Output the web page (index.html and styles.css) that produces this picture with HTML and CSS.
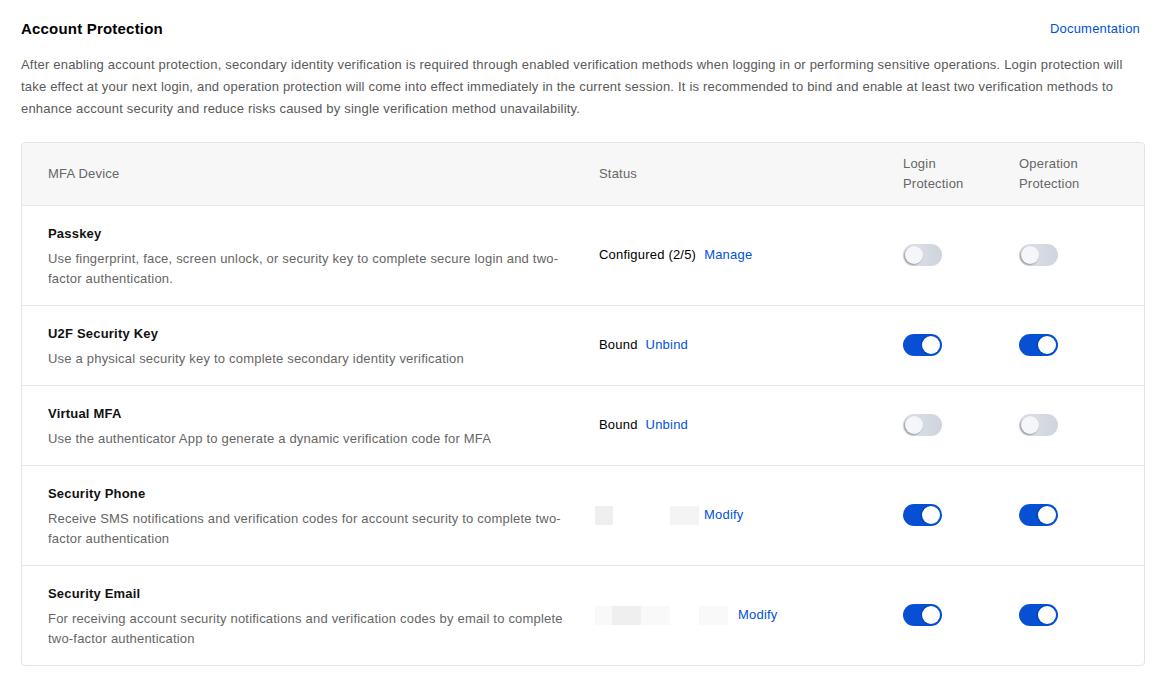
FILE: index.html
```html
<!DOCTYPE html>
<html lang="en">
<head>
    <meta charset="UTF-8">
    <meta name="viewport" content="width=device-width, initial-scale=1.0">
    <title>Account Protection</title>
    <link rel="stylesheet" href="styles.css">
</head>
<body>
    <div class="page">
        <div class="page-head">
            <h2>Account Protection</h2>
            <a class="link" href="#">Documentation</a>
        </div>
        <p class="intro">After enabling account protection, secondary identity verification is required through enabled verification methods when logging in or performing sensitive operations. Login protection will take effect at your next login, and operation protection will come into effect immediately in the current session. It is recommended to bind and enable at least two verification methods to enhance account security and reduce risks caused by single verification method unavailability.</p>

        <div class="mfa-table">
            <div class="row head">
                <div class="cell first">MFA Device</div>
                <div class="cell">Status</div>
                <div class="cell">Login<br>Protection</div>
                <div class="cell">Operation<br>Protection</div>
            </div>

            <div class="row">
                <div class="cell first">
                    <div class="device-name">Passkey</div>
                    <div class="device-desc">Use fingerprint, face, screen unlock, or security key to complete secure login and two-factor authentication.</div>
                </div>
                <div class="cell status">Configured (2/5) <a class="link" href="#">Manage</a></div>
                <div class="cell"><span class="switch"></span></div>
                <div class="cell"><span class="switch"></span></div>
            </div>

            <div class="row">
                <div class="cell first">
                    <div class="device-name">U2F Security Key</div>
                    <div class="device-desc">Use a physical security key to complete secondary identity verification</div>
                </div>
                <div class="cell status">Bound <a class="link" href="#">Unbind</a></div>
                <div class="cell"><span class="switch on"></span></div>
                <div class="cell"><span class="switch on"></span></div>
            </div>

            <div class="row">
                <div class="cell first">
                    <div class="device-name">Virtual MFA</div>
                    <div class="device-desc">Use the authenticator App to generate a dynamic verification code for MFA</div>
                </div>
                <div class="cell status">Bound <a class="link" href="#">Unbind</a></div>
                <div class="cell"><span class="switch"></span></div>
                <div class="cell"><span class="switch"></span></div>
            </div>

            <div class="row">
                <div class="cell first">
                    <div class="device-name">Security Phone</div>
                    <div class="device-desc">Receive SMS notifications and verification codes for account security to complete two-factor authentication</div>
                </div>
                <div class="cell status">
                    <span class="masked">
                        <i class="blk w18 c2"></i><i class="sp w57"></i><i class="blk w29 c1"></i>
                    </span>
                    <a class="link" href="#">Modify</a>
                </div>
                <div class="cell"><span class="switch on"></span></div>
                <div class="cell"><span class="switch on"></span></div>
            </div>

            <div class="row">
                <div class="cell first">
                    <div class="device-name">Security Email</div>
                    <div class="device-desc">For receiving account security notifications and verification codes by email to complete two-factor authentication</div>
                </div>
                <div class="cell status">
                    <span class="masked">
                        <i class="blk w17 c0"></i><i class="blk w29 c2"></i><i class="blk w29 c0"></i><i class="sp w29"></i><i class="blk w29 c0"></i><i class="sp w5"></i>
                    </span>
                    <a class="link" href="#">Modify</a>
                </div>
                <div class="cell"><span class="switch on"></span></div>
                <div class="cell"><span class="switch on"></span></div>
            </div>
        </div>
    </div>
</body>
</html>
```

FILE: styles.css
```css
body {
    margin: 0;
    background: #fff;
    font-family: "Liberation Sans", Arial, Helvetica, sans-serif;
    font-size: 13px;
    letter-spacing: 0.2px;
    color: #000;
}
.page {
    padding: 16px 17px 16px 21px;
}
.page-head {
    display: flex;
    justify-content: space-between;
    align-items: center;
    height: 24px;
}
.page-head h2 {
    margin: 0;
    font-size: 15px;
    font-weight: bold;
    color: #000;
}
.link {
    color: #0052d9;
    text-decoration: none;
}
.page-head .link {
    margin-right: 5px;
}
.intro {
    margin: 14px 0 22px;
    line-height: 22px;
    color: #595959;
}

/* device table */
.mfa-table {
    border: 1px solid #e3e3e3;
    border-radius: 4px;
    overflow: hidden;
}
.row {
    display: grid;
    grid-template-columns: 551px 304px 116px 1fr;
    border-bottom: 1px solid #e7e7e7;
}
.row:last-child {
    border-bottom: none;
}
.row.head {
    background: #f7f7f7;
    height: 62px;
    color: #666;
}
.cell {
    display: flex;
    align-items: center;
    padding: 0 10px 1px 26px;
    line-height: 20px;
}
.row.head .cell {
    padding-bottom: 0;
}
.cell.first {
    flex-direction: column;
    align-items: flex-start;
    justify-content: center;
    padding: 18px 4px 16px 26px;
}
.row.head .cell.first {
    padding-top: 0;
    padding-bottom: 0;
}
.device-name {
    font-weight: bold;
    color: #111;
}
.device-desc {
    margin-top: 5px;
    color: #666;
}
.status .link {
    margin-left: 8px;
}

/* redacted contact values */
.masked {
    display: flex;
    margin-left: -4px;
    height: 19px;
}
.masked i {
    display: block;
    height: 19px;
}
.c0 { background: #f9f9f9; }
.c1 { background: #f4f4f4; }
.c2 { background: #efefef; }
.w5 { width: 5px; }
.w17 { width: 17px; }
.w18 { width: 18px; }
.w29 { width: 29px; }
.w57 { width: 57px; }
.masked + .link {
    margin-left: 5px;
}

/* toggle switch */
.switch {
    position: relative;
    display: inline-block;
    width: 39px;
    height: 22px;
    border-radius: 11px;
    background: linear-gradient(90deg, #dfe2e8, #cfd4dd);
}
.switch::after {
    content: "";
    position: absolute;
    top: 2px;
    left: 2px;
    width: 18px;
    height: 18px;
    border-radius: 50%;
    background: #f5f6f9;
    box-shadow: -1px 1px 2px rgba(0, 0, 0, 0.35);
}
.switch.on {
    background: linear-gradient(90deg, #0a4fd1, #0052d9);
}
.switch.on::after {
    left: auto;
    right: 2px;
    background: #fff;
    box-shadow: -1px 0 2px rgba(0, 0, 0, 0.25);
}
```
